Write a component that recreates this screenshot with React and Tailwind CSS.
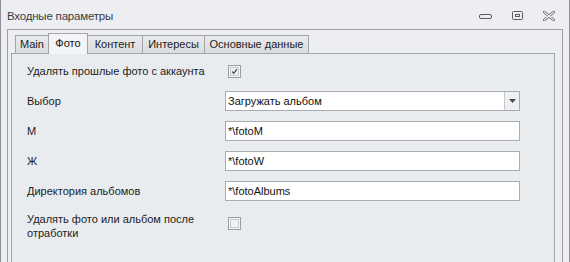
import React from "react";

const tabs = [
  { id: "main", title: "Main", w: "w-[33px]", cls: "border-l" },
  { id: "foto", title: "Фото", w: "w-[40px]", cls: "border-l border-r", active: true },
  { id: "content", title: "Контент", w: "w-[55px]", cls: "border-r" },
  { id: "interests", title: "Интересы", w: "w-[62px]", cls: "border-r" },
  { id: "basic", title: "Основные данные", w: "w-[104px]", cls: "border-r" },
];

function Checkbox({ checked }) {
  return (
    <div className="w-[13px] h-[13px] border border-[#9a9c9f] bg-[#f4f5f6] p-px">
      <div className="w-full h-full border border-[#c9cbce] bg-[#eef0f2] flex items-center justify-center">
        {checked && (
          <svg width="9" height="9" viewBox="0 0 9 9">
            <path d="M1.5 4.5 L3.5 6.8 L7.6 1.6" stroke="#4a4c50" strokeWidth="1.6" fill="none" />
          </svg>
        )}
      </div>
    </div>
  );
}

function TextBox({ value }) {
  return (
    <div className="w-[295px] h-[20px] border border-[#a9acb1] bg-white flex items-center pl-[2px] text-[#111]">
      {value}
    </div>
  );
}

function Row({ label, children }) {
  return (
    <div className="h-[30px] flex items-center">
      <div className="w-[198px] whitespace-nowrap">{label}</div>
      {children}
    </div>
  );
}

export default function App() {
  return (
    <div className="w-[570px] h-[262px] overflow-hidden bg-[#eceef1] border-l border-r border-[#8e9094] flex flex-col font-['Liberation_Sans',sans-serif] text-[11px] text-[#1c1c1c]">
      {/* Title bar */}
      <div className="h-[29px] flex items-center pl-[6px] pr-[14px] pt-[4px]">
        <div className="flex-1 text-[11.5px] tracking-[-0.2px] text-[#3a3b3e]">Входные параметры</div>
        <div className="flex items-center gap-[20px] -mt-[2px]">
          <svg width="13" height="6" viewBox="0 0 13 6" className="mt-[3px]">
            <rect x="0.5" y="0.5" width="12" height="4" rx="1.5" fill="none" stroke="#5a5c60" />
          </svg>
          <svg width="11" height="9" viewBox="0 0 11 9">
            <rect x="0.5" y="0.5" width="10" height="8" rx="1" fill="none" stroke="#5a5c60" />
            <rect x="3.5" y="3.5" width="4" height="2" fill="none" stroke="#5a5c60" />
          </svg>
          <svg width="12" height="10" viewBox="0 0 12 10">
            <path d="M1.2 1 L10.8 9 M10.8 1 L1.2 9" stroke="#6a6c70" strokeWidth="2.8" strokeLinecap="round" />
            <path d="M1.2 1 L10.8 9 M10.8 1 L1.2 9" stroke="#eceef1" strokeWidth="1.1" strokeLinecap="round" />
          </svg>
        </div>
      </div>

      {/* Outer panel */}
      <div className="flex-1 ml-[6px] mr-[6px] border-t border-l border-r border-[#9c9ea2] pl-[3px] pr-[7px] pt-[3px] flex flex-col">
        {/* Tabs */}
        <div className="h-[20px] flex items-end ml-[4px] relative z-10">
          {tabs.map((t) =>
            t.active ? (
              <div
                key={t.id}
                className={`${t.w} h-[21px] -mb-px border-t ${t.cls} border-[#a2a4a8] bg-[#f3f4f6] flex items-center justify-center whitespace-nowrap text-[#111] pb-[2px]`}
              >
                {t.title}
              </div>
            ) : (
              <div
                key={t.id}
                className={`${t.w} h-[18px] border-t ${t.cls} border-[#a2a4a8] bg-gradient-to-b from-[#e8eaed] to-[#d9dce0] flex items-center justify-center whitespace-nowrap text-[#222]`}
              >
                {t.title}
              </div>
            )
          )}
        </div>

        {/* Tab page */}
        <div className="flex-1 border-t border-l border-r border-[#a2a4a8] bg-[#e9ecef] pl-[15px] pt-[2px]">
          <Row label="Удалять прошлые фото с аккаунта">
            <div className="pl-[3px]">
              <Checkbox checked />
            </div>
          </Row>
          <Row label="Выбор">
            <div className="w-[295px] h-[20px] border border-[#a9acb1] bg-white flex">
              <div className="flex-1 flex items-center pl-[2px] text-[#111]">Загружать альбом</div>
              <div className="w-[15px] border-l border-[#c4c6ca] bg-[#eef0f2] flex items-center justify-center">
                <svg width="7" height="4" viewBox="0 0 7 4">
                  <path d="M0 0 H7 L3.5 4 Z" fill="#4a4c50" />
                </svg>
              </div>
            </div>
          </Row>
          <Row label="М">
            <TextBox value="*\fotoM" />
          </Row>
          <Row label="Ж">
            <TextBox value="*\fotoW" />
          </Row>
          <Row label="Директория альбомов">
            <TextBox value="*\fotoAlbums" />
          </Row>
          <div className="flex pt-[6px]">
            <div className="w-[198px] leading-[14px]">
              Удалять фото или альбом после
              <br />
              отработки
            </div>
            <div className="pl-[3px] pt-[5px]">
              <Checkbox />
            </div>
          </div>
        </div>
      </div>
    </div>
  );
}
